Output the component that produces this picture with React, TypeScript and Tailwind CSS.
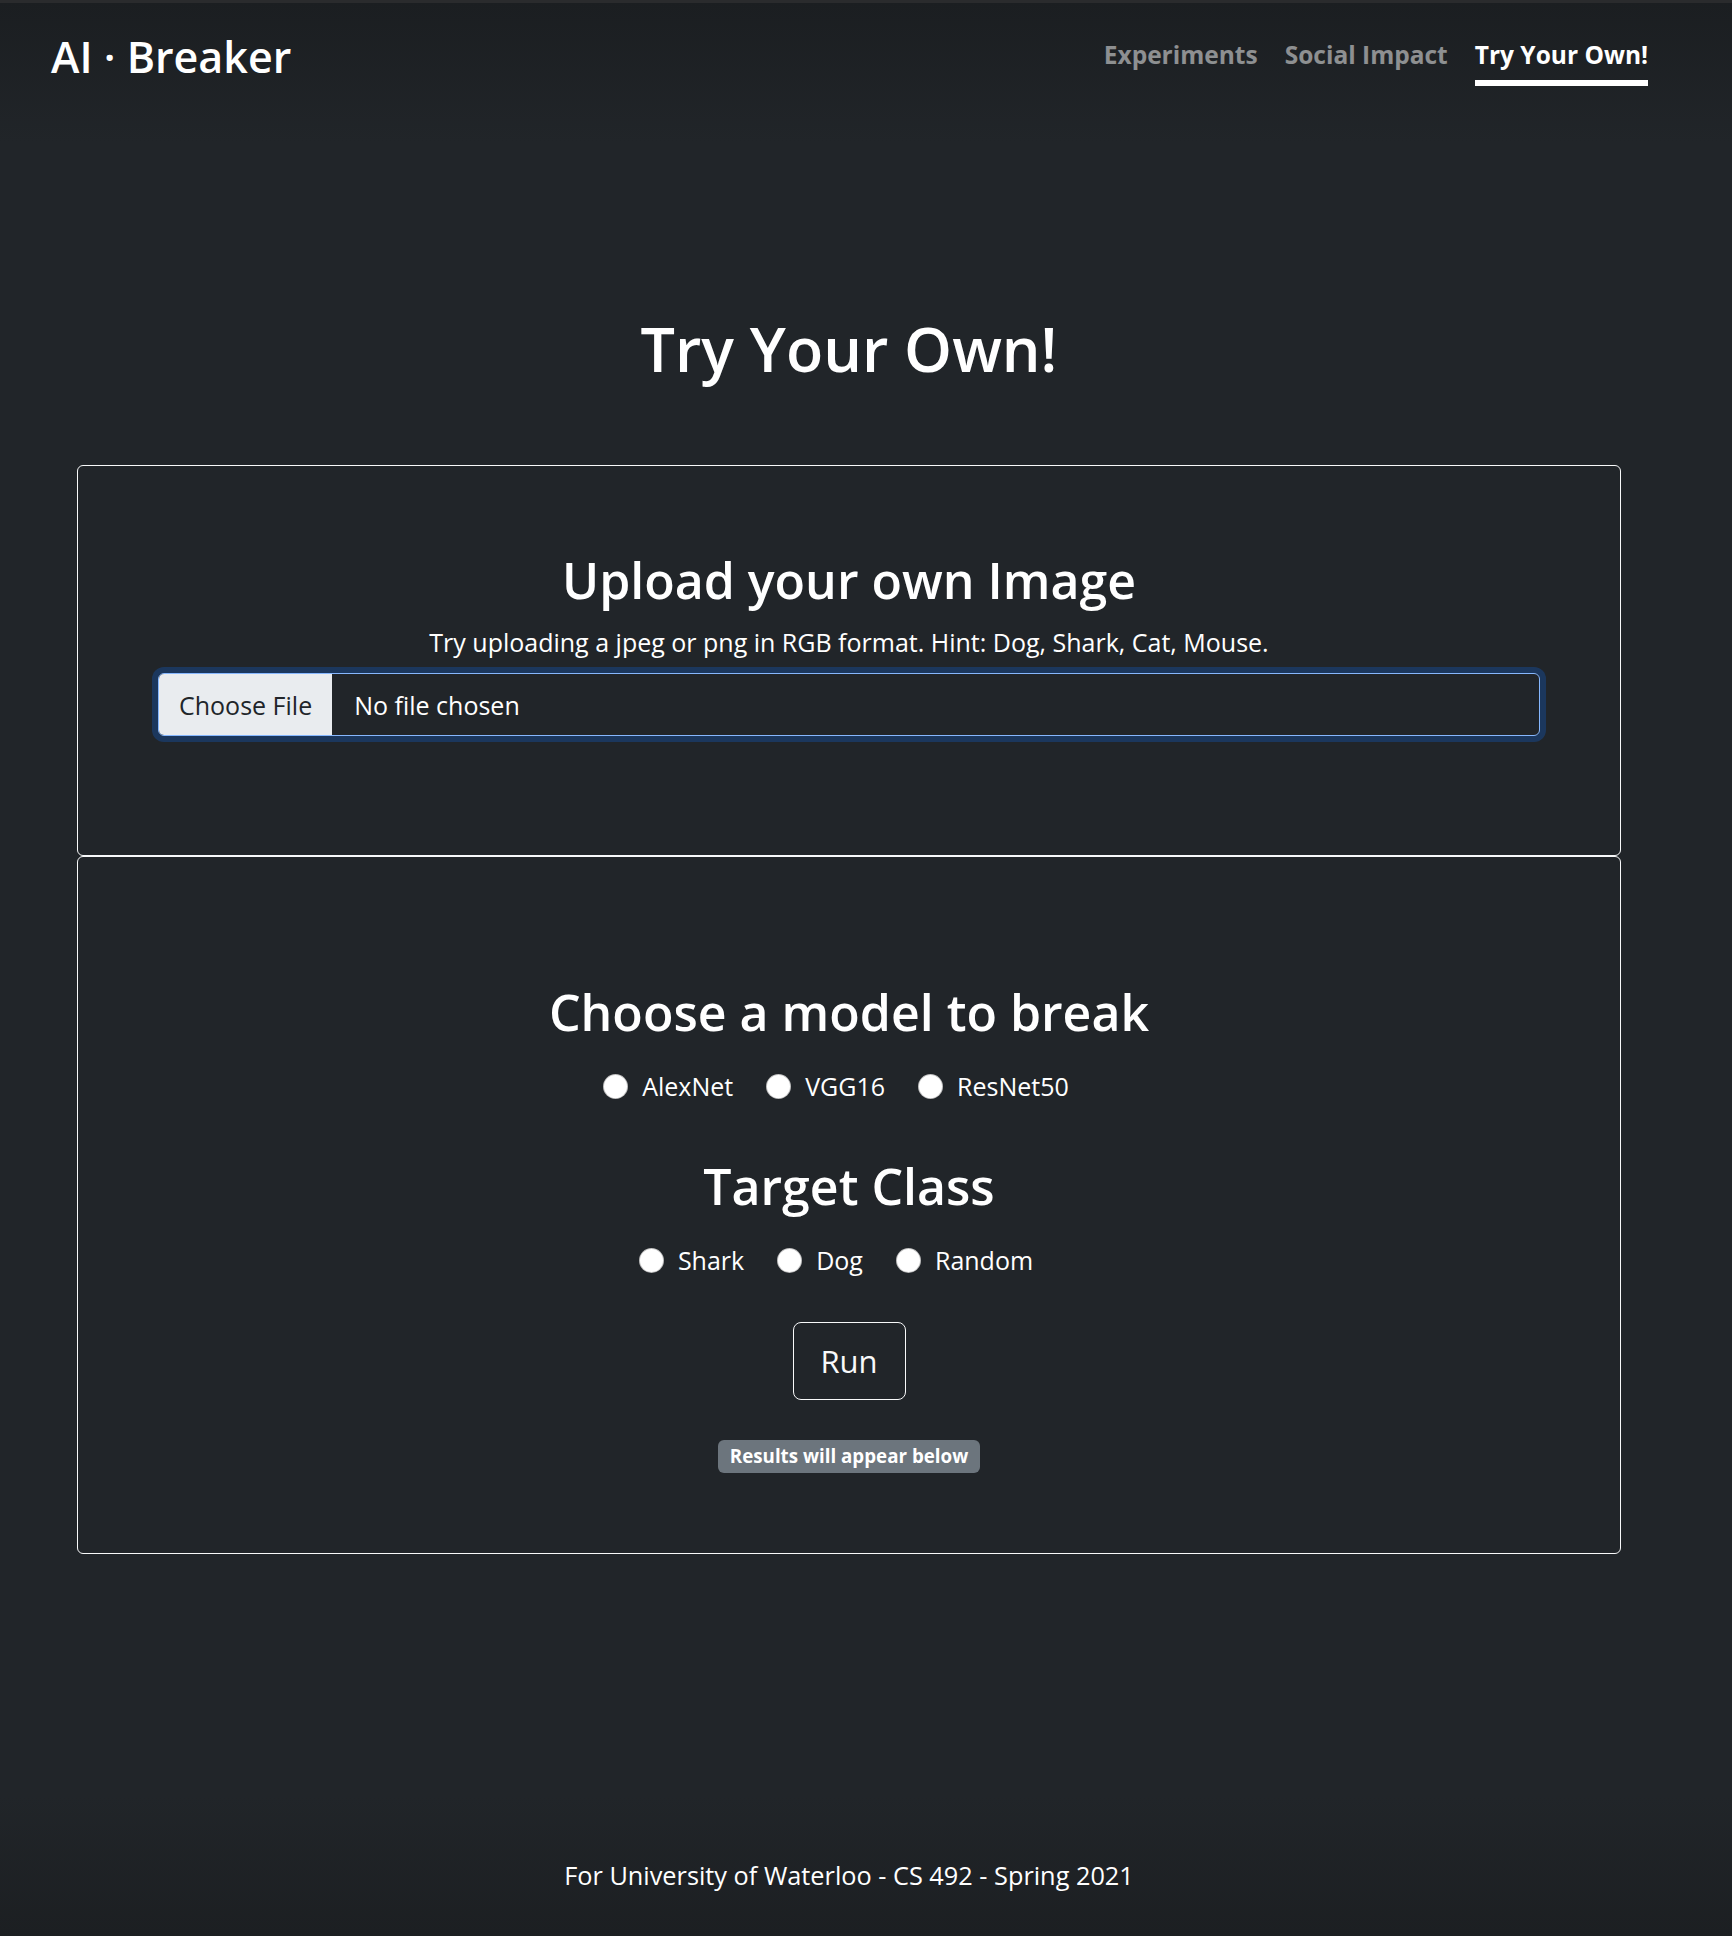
const models = ["AlexNet", "VGG16", "ResNet50"];
const targets = ["Shark", "Dog", "Random"];

const RadioRow = ({ items, name }: { items: string[]; name: string }) => (
  <div className="mt-[26px] flex justify-center gap-[7px]">
    {items.map((item) => (
      <label key={item} className="flex items-center mr-[26px] text-[25px] leading-[37.5px]">
        <input
          type="radio"
          name={name}
          className="appearance-none m-0 w-[25px] h-[25px] rounded-full bg-white border border-black/25"
        />
        <span className="ml-[14px]">{item}</span>
      </label>
    ))}
  </div>
);

export default function App() {
  return (
    <div className="min-h-[1936px] w-full bg-[linear-gradient(to_bottom,#1b1e21_0px,#212529_140px,#212529_calc(100%-140px),#1c1f22_100%)] border-t-[3px] border-[#2a2b2d] text-white font-['Open_Sans',sans-serif]">
      <div className="w-[1698px] min-h-[1933px] flex flex-col">
        <header className="flex justify-between items-start pt-[27px] pl-[51px] pr-[50px]">
          <h3 className="mt-[1px] text-[43px] leading-[52px] font-semibold">AI · Breaker</h3>
          <nav className="flex gap-[27px] text-[24.5px] leading-[37.5px] font-bold">
            <a className="py-[6px] border-b-[6px] border-transparent text-white/50">Experiments</a>
            <a className="py-[6px] border-b-[6px] border-transparent text-white/50">Social Impact</a>
            <a className="py-[6px] border-b-[6px] border-white text-white">Try Your Own!</a>
          </nav>
        </header>

        <h1 className="mt-[227px] text-center text-[61px] leading-[72px] font-semibold">Try Your Own!</h1>

        <main className="mt-[80px] mx-[77px] flex flex-col">
          <section className="border border-[#f8f9fa] rounded-[6px] pt-[84px] pb-[119px] px-[80px] text-center">
            <h2 className="text-[50px] leading-[60px] font-semibold">Upload your own Image</h2>
            <p className="mt-[14px] text-[25px] leading-[37.5px]">
              Try uploading a jpeg or png in RGB format. Hint: Dog, Shark, Cat, Mouse.
            </p>
            <div className="mt-[12px] h-[63px] flex items-stretch border border-[#86b7fe] rounded-[6px] overflow-hidden shadow-[0_0_0_6px_rgba(13,110,253,0.25)] text-[25px]">
              <div className="flex items-center pt-[3px] px-[20px] bg-[#e9ecef] text-[#212529]">Choose File</div>
              <div className="flex items-center pt-[3px] pl-[22px]">No file chosen</div>
            </div>
          </section>

          <section className="border border-[#f8f9fa] rounded-[6px] pt-[125px] pb-[80px] flex flex-col items-center">
            <h2 className="text-[50px] leading-[60px] font-semibold">Choose a model to break</h2>
            <RadioRow items={models} name="model" />
            <h2 className="mt-[50px] text-[50px] leading-[60px] font-semibold">Target Class</h2>
            <RadioRow items={targets} name="target" />
            <button className="mt-[43px] w-[113px] h-[78px] border border-[#f8f9fa] rounded-[8px] text-[31px] text-[#f8f9fa]">
              Run
            </button>
            <span className="mt-[40px] h-[33px] px-[12px] flex items-center bg-[#6c757d] rounded-[6px] text-[18.75px] font-bold leading-none">
              Results will appear below
            </span>
          </section>
        </main>

        <footer className="mt-auto pb-[42px] text-center text-[25.3px] leading-[37.5px]">
          For University of Waterloo - CS 492 - Spring 2021
        </footer>
      </div>
    </div>
  );
}
